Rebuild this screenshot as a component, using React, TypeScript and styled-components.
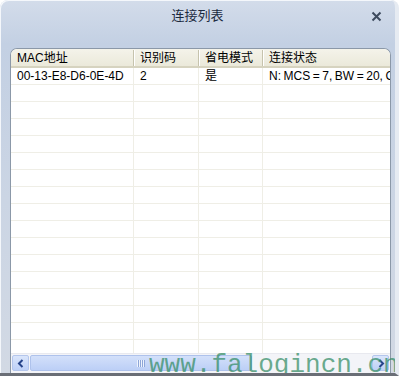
import * as React from 'react'
import styled, { createGlobalStyle } from 'styled-components'

const GlobalStyle = createGlobalStyle`
  html, body {
    margin: 0;
    padding: 0;
    background: #ffffff;
  }
  body {
    font-family: "Liberation Sans", "Noto Sans CJK SC", sans-serif;
    font-size: 12px;
  }
`

const Window = styled.div`
  position: relative;
  box-sizing: border-box;
  width: 399px;
  height: 376px;
  border-radius: 8px 8px 0 0;
  background: linear-gradient(#d3dcea 0px, #c3d0e3 44px, #cbd5e4 200px, #d2d9e4 100%);
  border-right: 4px solid #e6ebf2;
  border-bottom: 3px solid #6a6e76;
  box-shadow: inset 1px 1px 0 #f4f7fb;
  display: flex;
  flex-direction: column;
  overflow: hidden;
`

const TitleBar = styled.div`
  flex: none;
  height: 32px;
  display: flex;
  align-items: center;
  justify-content: center;
  position: relative;
  color: #1b2a3f;
  font-size: 13px;
  line-height: 16px;
`

const CloseButton = styled.div`
  position: absolute;
  right: 11px;
  top: 8px;
  width: 16px;
  height: 16px;
  display: flex;
  align-items: center;
  justify-content: center;
`

const Body = styled.div`
  flex: 1;
  min-height: 0;
  padding: 16px 4px 0 10px;
  display: flex;
`

const Panel = styled.div`
  flex: 1;
  min-height: 0;
  display: flex;
  flex-direction: column;
  border: 1px solid #8b98a8;
  border-bottom: none;
  border-radius: 7px 7px 0 0;
  background: #ffffff;
  overflow: hidden;
`

const Grid = styled.div`
  flex: 1;
  min-height: 0;
  overflow: hidden;
`

const HeaderRow = styled.div`
  display: flex;
  height: 16px;
  padding-top: 1px;
  background: linear-gradient(#f4f3ea, #ebe9da);
  border-bottom: 2px solid #d6d3bf;
`

const HeaderCell = styled.div<{ $w: number; $last?: boolean }>`
  box-sizing: border-box;
  width: ${p => p.$w}px;
  flex: ${p => (p.$last ? 1 : 'none')};
  padding-left: 6px;
  line-height: 17px;
  color: #000;
  white-space: nowrap;
  border-right: ${p => (p.$last ? 'none' : '1px solid #c6c3ad')};
  box-shadow: ${p => (p.$last ? 'none' : '1px 0 0 #ffffff')};
`

const Row = styled.div`
  display: flex;
  height: 16px;
  border-bottom: 1px solid #efeee6;
`

const Cell = styled.div<{ $w: number; $last?: boolean }>`
  box-sizing: border-box;
  width: ${p => p.$w}px;
  flex: ${p => (p.$last ? 1 : 'none')};
  padding-left: 6px;
  line-height: 16px;
  white-space: nowrap;
  word-spacing: -0.8px;
  overflow: hidden;
  color: #000;
  border-right: ${p => (p.$last ? 'none' : '1px solid #efeee6')};
`

const ScrollBar = styled.div`
  flex: none;
  height: 16px;
  display: flex;
  background: #f3f4f8;
  border-top: 1px solid #e8e9ef;
  padding: 1px 1px 2px;
  gap: 1px;
`

const ArrowButton = styled.div`
  width: 15px;
  display: flex;
  align-items: center;
  justify-content: center;
  background: linear-gradient(#dae5fb, #bdd0f7);
  border: 1px solid #b4c6ec;
  border-radius: 2px;
`

const Thumb = styled.div`
  width: 220px;
  display: flex;
  align-items: center;
  justify-content: center;
  background: linear-gradient(#d3e0fa, #bccff6);
  border: 1px solid #aec2ec;
  border-radius: 2px;
`

const Track = styled.div`
  flex: 1;
`

const Grip = styled.div`
  width: 8px;
  height: 7px;
  background: repeating-linear-gradient(90deg, #eef3fd 0 1px, #8ea6d8 1px 2px);
`

const Watermark = styled.div`
  position: absolute;
  left: 149px;
  top: 351px;
  font-family: "Liberation Mono", monospace;
  font-size: 26px;
  line-height: 28px;
  color: rgba(50, 140, 100, 0.72);
  white-space: nowrap;
  pointer-events: none;
`

const columns = [
  { title: 'MAC地址', w: 123 },
  { title: '识别码', w: 65 },
  { title: '省电模式', w: 64 },
  { title: '连接状态', w: 0 }
]

const data = [['00-13-E8-D6-0E-4D', '2', '是', 'N: MCS = 7, BW = 20, GI = 800']]

const EMPTY_ROWS = 17

const App: React.FC = () => (
  <>
    <GlobalStyle />
    <Window>
      <TitleBar>
        连接列表
        <CloseButton>
          <svg width="11" height="11" viewBox="0 0 11 11">
            <path d="M1.5 1.5 L9.5 9.5 M9.5 1.5 L1.5 9.5" stroke="#3d4a5e" strokeWidth="2" />
          </svg>
        </CloseButton>
      </TitleBar>
      <Body>
        <Panel>
          <Grid>
            <HeaderRow>
              {columns.map((c, i) => (
                <HeaderCell key={c.title} $w={c.w} $last={i === columns.length - 1}>
                  {c.title}
                </HeaderCell>
              ))}
            </HeaderRow>
            {data.map(row => (
              <Row key={row[0]}>
                {row.map((v, i) => (
                  <Cell key={i} $w={columns[i].w} $last={i === columns.length - 1}>
                    {v}
                  </Cell>
                ))}
              </Row>
            ))}
            {Array.from({ length: EMPTY_ROWS }).map((_, r) => (
              <Row key={'e' + r}>
                {columns.map((c, i) => (
                  <Cell key={i} $w={c.w} $last={i === columns.length - 1} />
                ))}
              </Row>
            ))}
          </Grid>
          <ScrollBar>
            <ArrowButton>
              <svg width="8" height="9" viewBox="0 0 8 9">
                <path d="M5.5 1 L2 4.5 L5.5 8" stroke="#26448a" strokeWidth="2" fill="none" />
              </svg>
            </ArrowButton>
            <Thumb>
              <Grip />
            </Thumb>
            <Track />
            <ArrowButton>
              <svg width="8" height="9" viewBox="0 0 8 9">
                <path d="M2.5 1 L6 4.5 L2.5 8" stroke="#26448a" strokeWidth="2" fill="none" />
              </svg>
            </ArrowButton>
          </ScrollBar>
        </Panel>
      </Body>
      <Watermark>www.falogincn.cn</Watermark>
    </Window>
  </>
)

export default App
